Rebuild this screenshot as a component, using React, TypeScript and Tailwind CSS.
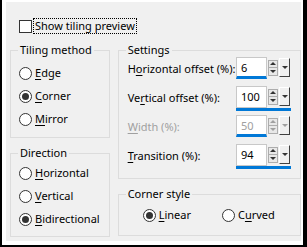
import type { ReactNode } from 'react'

function U({ children }: { children: ReactNode }) {
  return <span className="underline underline-offset-2">{children}</span>
}

function Radio({ checked, children, className = '' }: { checked?: boolean; children: ReactNode; className?: string }) {
  return (
    <div className={`flex items-center h-[23px] ${className}`}>
      <span className="w-[13px] h-[13px] rounded-full border border-[#333] bg-white flex items-center justify-center">
        {checked && <span className="w-[7px] h-[7px] rounded-full bg-[#333]" />}
      </span>
      <span className="ml-[3px]">{children}</span>
    </div>
  )
}

function Group({ title, className = '', children }: { title: string; className?: string; children: ReactNode }) {
  return (
    <fieldset className={`border border-[#dcdcdc] ${className}`}>
      <legend className="ml-[7px] px-[2px]">{title}</legend>
      {children}
    </fieldset>
  )
}

function Spin({ value, wide, disabled }: { value: string; wide?: boolean; disabled?: boolean }) {
  const tri = disabled ? 'border-[#a0a0a0]' : 'border-[#333]'
  return (
    <div className={`flex items-center w-[55px] h-[25px] border-b-[3px] ${wide ? 'border-[#0078d7]' : 'border-transparent'}`}>
      <div className={`w-[31px] h-[22px] bg-white border border-[#c8c8c8] ${wide ? '' : 'border-b-[3px] border-b-[#0078d7]'} pl-[4px] leading-[20px] ${disabled ? 'text-[#a0a0a0]' : ''}`}>
        {value}
      </div>
      <div className="ml-[1px] w-[10px] h-[16px] border border-[#adadad] bg-[#e8e8e8] flex flex-col">
        <div className="flex-1 flex items-center justify-center border-b border-[#adadad]">
          <span className={`w-0 h-0 border-x-[3px] border-x-transparent border-b-[3px] ${tri}`} />
        </div>
        <div className="flex-1 flex items-center justify-center">
          <span className={`w-0 h-0 border-x-[3px] border-x-transparent border-t-[3px] ${tri}`} />
        </div>
      </div>
      <div className="ml-[1px] w-[11px] h-[19px] bg-[#f0f0f0] border border-white border-r-[#404040] border-b-[#404040] flex items-center justify-center">
        <span className={`w-0 h-0 border-x-[3px] border-x-transparent border-t-[3px] ${tri}`} />
      </div>
    </div>
  )
}

function Row({ label, children, disabled }: { label: ReactNode; children: ReactNode; disabled?: boolean }) {
  return (
    <div className={`flex items-center justify-between h-[29px] ${disabled ? 'text-[#a0a0a0]' : ''}`}>
      <span>{label}</span>
      {children}
    </div>
  )
}

export default function App() {
  return (
    <div className="w-[307px] h-[247px] bg-black pl-[2px] pr-[4px] pb-[2px] text-[11px] text-black" style={{ fontFamily: '"Noto Sans", sans-serif' }}>
      <div className="h-full bg-white pl-[4px] pt-[2px] pr-[2px] pb-[4px]">
        <div className="h-full bg-[#f0f0f0] pt-[17px]">
          <label className="flex items-center ml-[13px] h-[14px]">
            <span className="w-[13px] h-[13px] border border-[#333] bg-white" />
            <span className="ml-[2px] px-[1px] outline outline-1 outline-dotted outline-black leading-[14px]">Show tiling preview</span>
          </label>
          <div className="flex mt-[9px] ml-[4px] gap-[8px]">
            <div className="w-[100px] flex flex-col gap-[7px]">
              <Group title="Tiling method" className="h-[96px]">
                <div className="pl-[8px] pt-[3px]">
                  <Radio><U>E</U>dge</Radio>
                  <Radio checked><U>C</U>orner</Radio>
                  <Radio><U>M</U>irror</Radio>
                </div>
              </Group>
              <Group title="Direction" className="h-[92px]">
                <div className="pl-[8px]">
                  <Radio><U>H</U>orizontal</Radio>
                  <Radio><U>V</U>ertical</Radio>
                  <Radio checked><U>B</U>idirectional</Radio>
                </div>
              </Group>
            </div>
            <div className="w-[184px] flex flex-col gap-[7px]">
              <Group title="Settings" className="h-[137px]">
                <div className="pl-[9px] pr-[9px] -mt-[4px]">
                  <Row label={<>H<U>o</U>rizontal offset (%):</>}><Spin value="6" /></Row>
                  <Row label={<>Ve<U>r</U>tical offset (%):</>}><Spin value="100" wide /></Row>
                  <Row label={<><U>W</U>idth (%):</>} disabled><Spin value="50" disabled /></Row>
                  <Row label={<><U>T</U>ransition (%):</>}><Spin value="94" wide /></Row>
                </div>
              </Group>
              <Group title="Corner style" className="h-[50px]">
                <div className="flex gap-[31px] pt-[1px] pl-[24px]">
                  <Radio checked><U>L</U>inear</Radio>
                  <Radio>C<U>u</U>rved</Radio>
                </div>
              </Group>
            </div>
          </div>
        </div>
      </div>
    </div>
  )
}
